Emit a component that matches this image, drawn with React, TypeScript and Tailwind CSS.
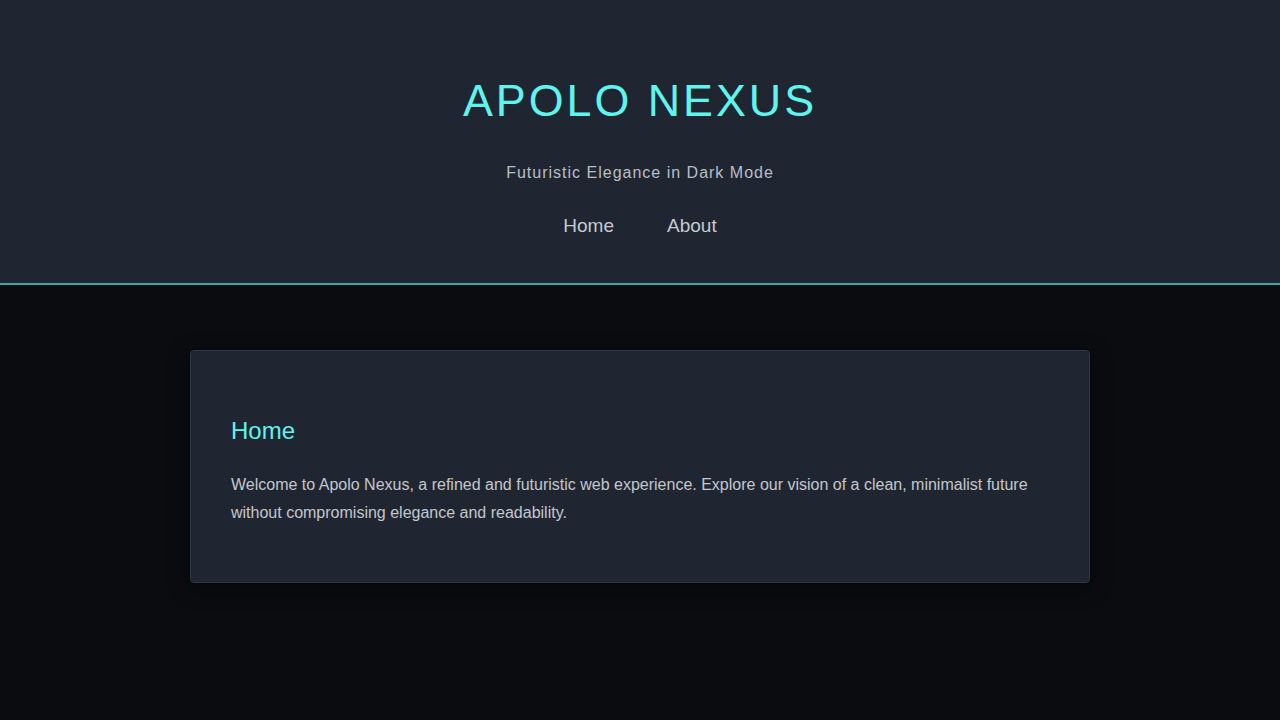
export default function App() {
  return (
    <div className="min-h-screen bg-[#0a0c10] font-['Liberation_Sans',Arial,sans-serif]">
      {/* Header */}
      <header className="bg-[#1f2632] border-b-2 border-[#4a9e9c] pt-[73px] pb-[45px] text-center">
        <h1 className="text-[44.8px] leading-[54px] tracking-[3px] text-[#5ef5ee]">APOLO NEXUS</h1>
        <p className="mt-[34px] text-[16px] leading-[24px] tracking-[1px] text-[#b9bec6]">
          Futuristic Elegance in Dark Mode
        </p>
        <nav className="mt-[29px] flex justify-center gap-[53px] text-[19px] leading-[24px] text-[#c6cad0]">
          <a href="#">Home</a>
          <a href="#">About</a>
        </nav>
      </header>

      {/* Content */}
      <main className="pt-[65px] flex justify-center">
        <section className="w-[900px] bg-[#1f2632] border border-[#2c3542] rounded-[4px] shadow-[0_4px_20px_rgba(0,0,0,0.5)] px-[40px] pt-[65px] pb-[55px]">
          <h2 className="text-[24px] leading-[29px] text-[#5ef5ee]">Home</h2>
          <p className="mt-[26px] text-[16px] leading-[28px] text-[#c3c7cd]">
            Welcome to Apolo Nexus, a refined and futuristic web experience. Explore our vision of a clean, minimalist future without compromising elegance and readability.
          </p>
        </section>
      </main>
    </div>
  )
}
